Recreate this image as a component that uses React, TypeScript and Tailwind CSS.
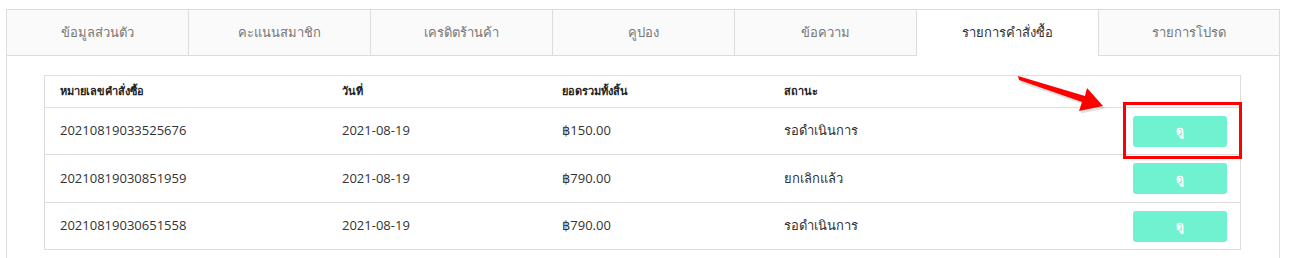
import React from "react";

const tabs = [
  "ข้อมูลส่วนตัว",
  "คะแนนสมาชิก",
  "เครดิตร้านค้า",
  "คูปอง",
  "ข้อความ",
  "รายการคำสั่งซื้อ",
  "รายการโปรด",
];

const rows = [
  { id: "20210819033525676", date: "2021-08-19", total: "฿150.00", status: "รอดำเนินการ", h: "h-[47px]" },
  { id: "20210819030851959", date: "2021-08-19", total: "฿790.00", status: "ยกเลิกแล้ว", h: "h-[48px]" },
  { id: "20210819030651558", date: "2021-08-19", total: "฿790.00", status: "รอดำเนินการ", h: "h-[47px]" },
];

export default function App() {
  const active = 5;
  return (
    <div
      className="relative w-[1292px] h-[258px] overflow-hidden bg-white text-[#333]"
      style={{ fontFamily: '"Open Sans", "Noto Sans", "DejaVu Sans", sans-serif' }}
    >
      <div className="ml-[6px] mt-[9px] w-[1274px]">
        <div className="flex h-[47px]">
          {tabs.map((t, i) => (
            <div
              key={t}
              className={
                "flex w-[182px] items-center justify-center border-t border-l border-[#dddddd] text-[13px] " +
                (i === tabs.length - 1 ? "border-r " : "") +
                (i === active
                  ? "bg-white text-[#333333]"
                  : "border-b bg-[#fafafa] text-[#777777]")
              }
            >
              {t}
            </div>
          ))}
        </div>
        <div className="h-[220px] border-x border-[#dddddd] pl-[37px] pr-[38px] pt-[19px]">
          <div className="border-x border-t border-[#dddddd]">
            <div className="flex h-[32px] items-center border-b border-[#dddddd] text-[11px] font-extrabold text-[#222]">
              <div className="w-[281px] pl-[15px]">หมายเลขคำสั่งซื้อ</div>
              <div className="w-[220px] pl-[16px]">วันที่</div>
              <div className="w-[222px] pl-[16px]">ยอดรวมทั้งสิ้น</div>
              <div className="flex-1 pl-[16px]">สถานะ</div>
            </div>
            {rows.map((r) => (
              <div
                key={r.id}
                className={"flex items-center border-b border-[#dddddd] text-[13px] text-[#333] " + r.h}
              >
                <div className="w-[281px] pl-[15px]">{r.id}</div>
                <div className="w-[220px] pl-[16px]">{r.date}</div>
                <div className="w-[222px] pl-[16px]">{r.total}</div>
                <div className="flex-1 pl-[16px]">{r.status}</div>
                <div className="pr-[13px]">
                  <button className="flex h-[31px] w-[94px] items-center justify-center rounded-[3px] bg-[#70f2d1] text-[12px] font-bold text-white">
                    ดู
                  </button>
                </div>
              </div>
            ))}
          </div>
        </div>
      </div>

      {/* annotation: red box */}
      <div className="pointer-events-none absolute left-[1123px] top-[102px] h-[57px] w-[119px] border-[3px] border-[#ff0000]" />

      {/* annotation: arrow */}
      <svg
        className="pointer-events-none absolute left-0 top-0"
        width="1292"
        height="258"
        viewBox="0 0 1292 258"
      >
        <polygon
          points="1019,78 1084,97 1085,88 1104,107 1080,112 1083,103 1021,82"
          fill="#000"
          opacity="0.12"
          transform="translate(1,1.5)"
        />
        <polygon
          points="1018,76 1085,96 1087,88 1103,106 1079,111 1082,102 1019,80"
          fill="#ff0000"
        />
      </svg>
    </div>
  );
}
